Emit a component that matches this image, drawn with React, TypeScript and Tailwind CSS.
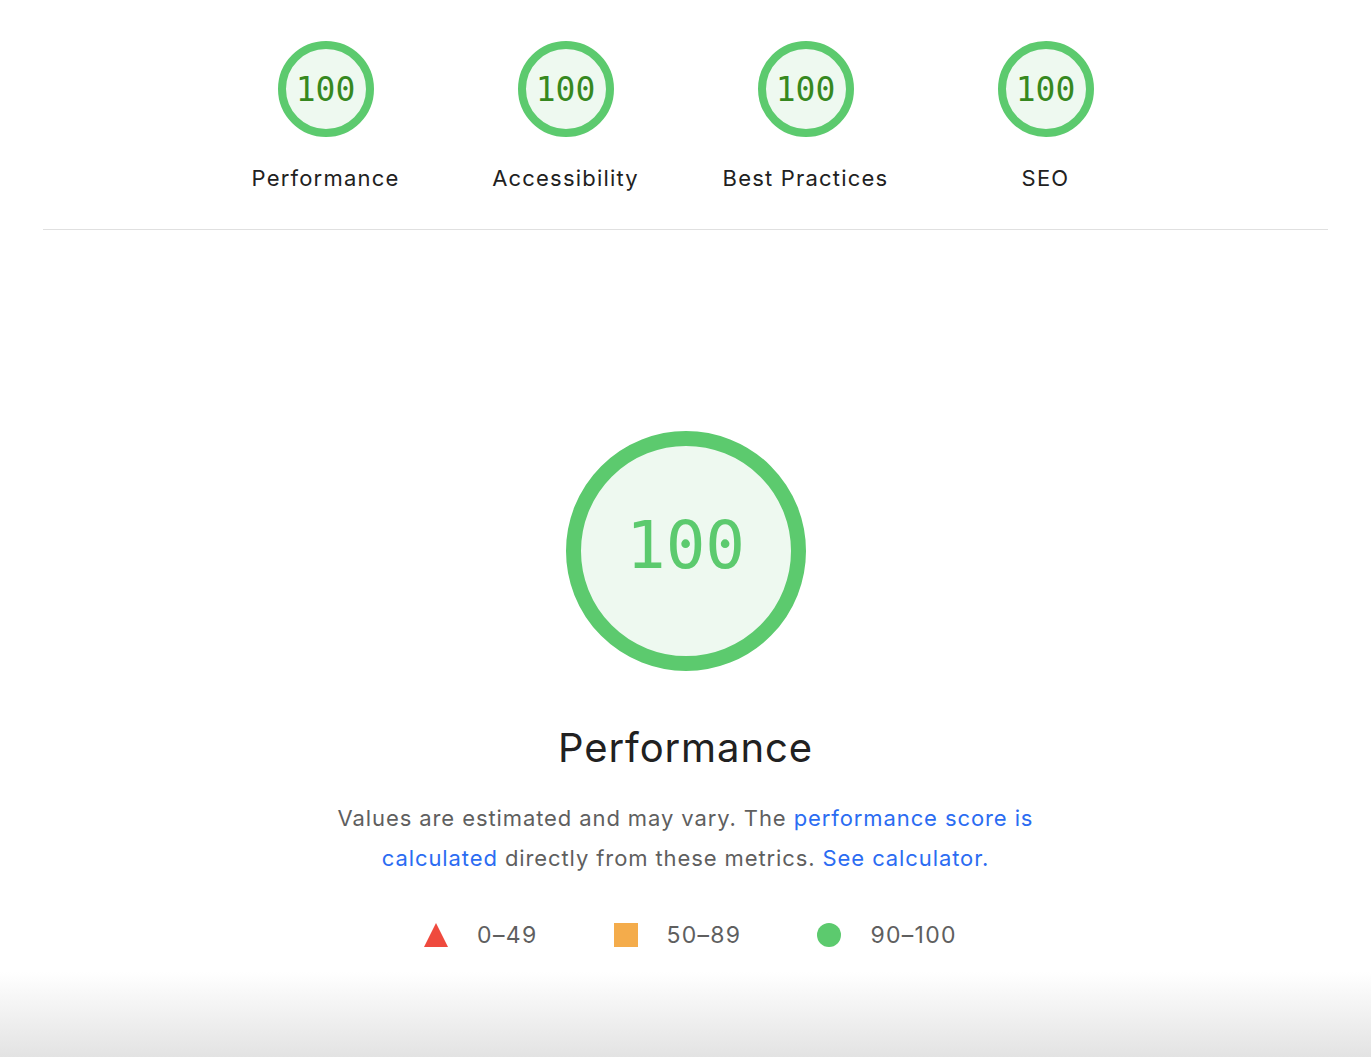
import React from "react";

const GREEN = "#5cca6e";
const FILL = "#eef9f0";

function SmallGauge({ label }: { label: string }) {
  return (
    <div className="flex w-[240px] flex-col items-center">
      <div className="relative h-[96px] w-[96px]">
        <svg width="96" height="96" viewBox="0 0 96 96" className="absolute inset-0">
          <circle cx="48" cy="48" r="44" fill={FILL} stroke={GREEN} strokeWidth="8" />
        </svg>
        <div className="absolute inset-0 flex items-center justify-center text-[33px] leading-none text-[#36881f] slashed-zero [font-family:'DejaVu_Sans_Mono',monospace]">
          100
        </div>
      </div>
      <div className="mt-[27px] text-[22px] leading-[28px] tracking-[1.2px] text-[#212121]">{label}</div>
    </div>
  );
}

export default function App() {
  return (
    <div className="relative min-h-[1057px] w-full bg-white [font-family:Inter,'Noto_Sans',sans-serif]">
      <div className="flex justify-center pt-[41px]">
        <SmallGauge label="Performance" />
        <SmallGauge label="Accessibility" />
        <SmallGauge label="Best Practices" />
        <SmallGauge label="SEO" />
      </div>
      <div className="mx-[43px] mt-[37px] h-px bg-[#e0e0e0]" />

      <div className="flex flex-col items-center pt-[201px]">
        <div className="relative h-[240px] w-[240px]">
          <svg width="240" height="240" viewBox="0 0 240 240" className="absolute inset-0">
            <circle cx="120" cy="120" r="112.5" fill={FILL} stroke={GREEN} strokeWidth="15" />
          </svg>
          <div className="absolute inset-0 flex items-center justify-center pb-[10px] text-[66px] leading-none text-[#5cca6e] slashed-zero [font-family:'DejaVu_Sans_Mono',monospace]">
            100
          </div>
        </div>
        <div className="mt-[52px] text-[40px] leading-[50px] tracking-[0.9px] text-[#212121]">Performance</div>
        <p className="mt-[25px] w-[760px] text-center text-[22px] leading-[40px] tracking-[0.9px] text-[#5f5f5f]">
          Values are estimated and may vary. The{" "}
          <span className="text-[#2b6cf2]">performance score is</span>
          <br />
          <span className="text-[#2b6cf2]">calculated</span> directly from these metrics.{" "}
          <span className="text-[#2b6cf2]">See calculator.</span>
        </p>
        <div className="ml-[10px] mt-[42px] flex items-center text-[23px] leading-[30px] tracking-[1.3px] text-[#5f5f5f]">
          <div className="flex items-center">
            <svg width="24" height="24" viewBox="0 0 24 24">
              <polygon points="12,0 24,24 0,24" fill="#ef4a3e" />
            </svg>
            <span className="ml-[29px]">0–49</span>
          </div>
          <div className="ml-[77px] flex items-center">
            <div className="h-[24px] w-[24px] bg-[#f4ac4b]" />
            <span className="ml-[28px]">50–89</span>
          </div>
          <div className="ml-[76px] flex items-center">
            <div className="h-[24px] w-[24px] rounded-full bg-[#5cca6e]" />
            <span className="ml-[29px]">90–100</span>
          </div>
        </div>
      </div>

      <div className="pointer-events-none absolute bottom-0 left-0 h-[85px] w-full bg-gradient-to-b from-[rgba(255,255,255,0)] to-[#e3e3e3]" />
    </div>
  );
}
